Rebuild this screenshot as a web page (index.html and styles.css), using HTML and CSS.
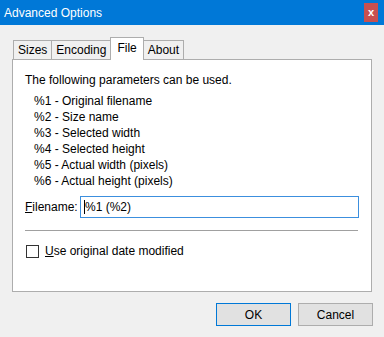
FILE: index.html
```html
<!DOCTYPE html>
<html lang="en">
<head>
    <meta charset="UTF-8">
    <title>Advanced Options</title>
    <link rel="stylesheet" href="styles.css">
</head>
<body>
    <div class="window">
        <div class="titlebar">
            <span class="title">Advanced Options</span>
            <span class="close">x</span>
        </div>

        <div class="tabs">
            <div class="tab">Sizes</div>
            <div class="tab">Encoding</div>
            <div class="tab active">File</div>
            <div class="tab">About</div>
        </div>

        <div class="panel">
            <p class="intro">The following parameters can be used.</p>
            <ul class="params">
                <li>%1 - Original filename</li>
                <li>%2 - Size name</li>
                <li>%3 - Selected width</li>
                <li>%4 - Selected height</li>
                <li>%5 - Actual width (pixels)</li>
                <li>%6 - Actual height (pixels)</li>
            </ul>

            <div class="field">
                <label class="field-label"><u>F</u>ilename:</label>
                <div class="text-input"><span class="caret"></span>%1 (%2)</div>
            </div>

            <div class="separator"></div>

            <div class="check-row">
                <span class="checkbox"></span>
                <span><u>U</u>se original date modified</span>
            </div>
        </div>

        <div class="buttons">
            <div class="button default">OK</div>
            <div class="button">Cancel</div>
        </div>
    </div>
</body>
</html>
```

FILE: styles.css
```css
body {
    margin: 0;
    background: #f0f0f0;
    font-family: "Liberation Sans", Arial, sans-serif;
    font-size: 12px;
    color: #000;
}

.window {
    width: 384px;
    height: 337px;
    background: #f0f0f0;
}

.titlebar {
    height: 25px;
    background: #0078d7;
    display: flex;
    align-items: center;
    justify-content: space-between;
    padding-left: 4px;
    box-sizing: border-box;
}

.title {
    color: #fff;
    font-size: 12px;
}

.close {
    width: 14px;
    height: 19px;
    margin-right: 6px;
    background: #c75050;
    color: #fff;
    font-weight: bold;
    font-size: 11px;
    display: flex;
    align-items: center;
    justify-content: center;
    line-height: 1;
}

.tabs {
    display: flex;
    align-items: flex-end;
    height: 22px;
    margin-top: 12px;
    padding-left: 13px;
    position: relative;
    z-index: 1;
}

.tab {
    height: 19px;
    box-sizing: border-box;
    border: 1px solid #adadad;
    border-bottom: none;
    margin-left: -1px;
    padding: 0 4px;
    background: #f0f0f0;
    display: flex;
    align-items: center;
    margin-bottom: 0;
}

.tab:first-child {
    margin-left: 0;
}

.tab.active {
    height: 23px;
    background: #fff;
    margin-bottom: -1px;
    padding: 0 6px 2px;
}

.panel {
    margin: 0 12px;
    height: 233px;
    box-sizing: border-box;
    border: 1px solid #adadad;
    background: #fff;
    padding: 12px 12px 0;
}

.intro {
    margin: 0;
    line-height: 16px;
}

.params {
    list-style: none;
    margin: 5px 0 0 9px;
    padding: 0;
    line-height: 16px;
}

.field {
    display: flex;
    align-items: center;
    margin-top: 7px;
}

.field-label {
    width: 55px;
}

.text-input {
    width: 279px;
    height: 22px;
    box-sizing: border-box;
    border: 1px solid #3c8fde;
    padding-left: 3px;
    display: flex;
    align-items: center;
}

.caret {
    width: 1px;
    height: 14px;
    background: #000;
    margin-right: 0;
}

.separator {
    height: 1px;
    background: #a0a0a0;
    margin-top: 12px;
    width: 333px;
}

.check-row {
    display: flex;
    align-items: center;
    margin-top: 13px;
    margin-left: 1px;
}

.checkbox {
    width: 13px;
    height: 13px;
    box-sizing: border-box;
    border: 1px solid #333;
    background: #fff;
    margin-right: 6px;
}

.buttons {
    display: flex;
    justify-content: flex-end;
    gap: 7px;
    margin-top: 11px;
    padding-right: 11px;
}

.button {
    width: 75px;
    height: 23px;
    box-sizing: border-box;
    border: 1px solid #adadad;
    background: #e1e1e1;
    display: flex;
    align-items: center;
    justify-content: center;
}

.button.default {
    border-color: #0078d7;
}
```
